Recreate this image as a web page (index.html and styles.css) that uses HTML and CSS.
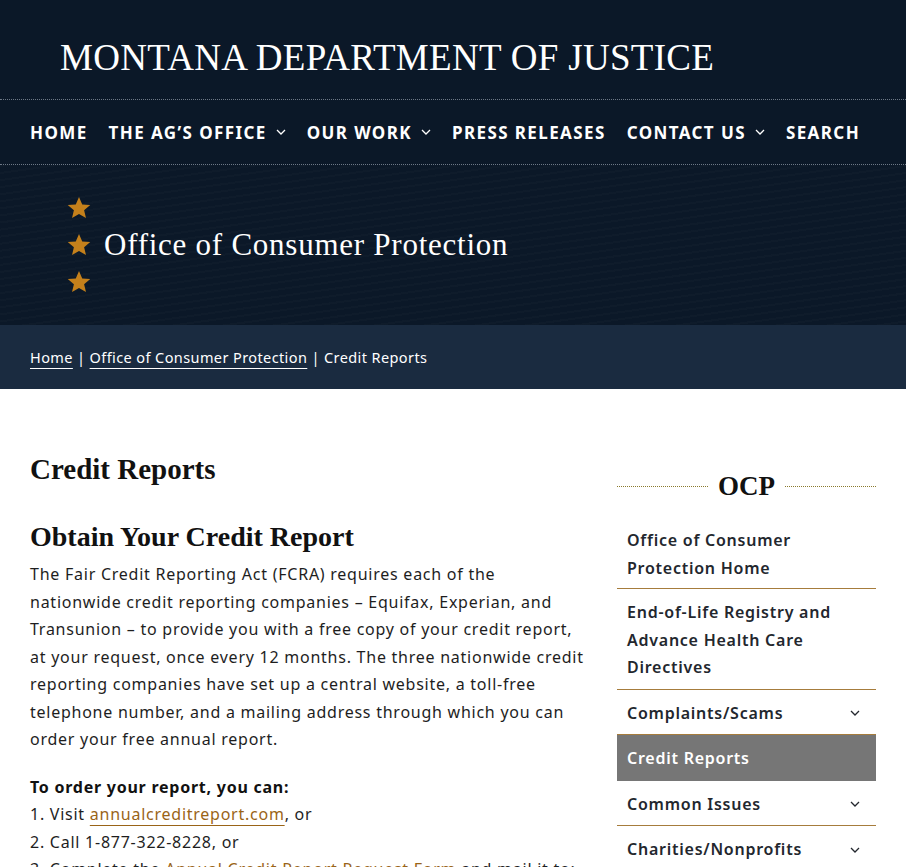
FILE: index.html
```html
<!DOCTYPE html>
<html lang="en">
<head>
    <meta charset="UTF-8">
    <meta name="viewport" content="width=device-width, initial-scale=1.0">
    <title>Credit Reports | Montana Department of Justice</title>
    <link rel="stylesheet" href="styles.css">
</head>
<body>
    <header class="site-header">
        <div class="brand">Montana Department of Justice</div>
        <nav class="main-nav">
            <a href="#">Home</a>
            <a href="#">The AG’s Office <svg class="caret" viewBox="0 0 10 6"><path d="M1 1l4 4 4-4"/></svg></a>
            <a href="#">Our Work <svg class="caret" viewBox="0 0 10 6"><path d="M1 1l4 4 4-4"/></svg></a>
            <a href="#">Press Releases</a>
            <a href="#">Contact Us <svg class="caret" viewBox="0 0 10 6"><path d="M1 1l4 4 4-4"/></svg></a>
            <a href="#">Search</a>
        </nav>
    </header>

    <section class="hero">
        <div class="stars">
            <svg viewBox="0 0 24 24"><path d="M12 1l3.1 7.1 7.7.6-5.9 5 1.8 7.5L12 17.2l-6.7 4 1.8-7.5-5.9-5 7.7-.6z"/></svg>
            <svg viewBox="0 0 24 24"><path d="M12 1l3.1 7.1 7.7.6-5.9 5 1.8 7.5L12 17.2l-6.7 4 1.8-7.5-5.9-5 7.7-.6z"/></svg>
            <svg viewBox="0 0 24 24"><path d="M12 1l3.1 7.1 7.7.6-5.9 5 1.8 7.5L12 17.2l-6.7 4 1.8-7.5-5.9-5 7.7-.6z"/></svg>
        </div>
        <h1 class="hero-title">Office of Consumer Protection</h1>
    </section>

    <div class="breadcrumb">
        <a href="#">Home</a> | <a href="#">Office of Consumer Protection</a> | Credit Reports
    </div>

    <div class="page">
        <main class="content">
            <h1>Credit Reports</h1>
            <h2>Obtain Your Credit Report</h2>
            <p>The Fair Credit Reporting Act (FCRA) requires each of the nationwide credit reporting companies – Equifax, Experian, and Transunion – to provide you with a free copy of your credit report, at your request, once every 12 months. The three nationwide credit reporting companies have set up a central website, a toll-free telephone number, and a mailing address through which you can order your free annual report.</p>
            <p>
                <b>To order your report, you can:</b><br>
                1. Visit <a href="#">annualcreditreport.com</a>, or<br>
                2. Call 1-877-322-8228, or<br>
                3. Complete the <a href="#">Annual Credit Report Request Form</a> and mail it to:
            </p>
        </main>

        <aside class="sidebar">
            <h3 class="side-title"><span>OCP</span></h3>
            <ul class="side-menu">
                <li><a href="#">Office of Consumer Protection Home</a></li>
                <li><a href="#">End-of-Life Registry and Advance Health Care Directives</a></li>
                <li class="has-sub"><a href="#">Complaints/Scams</a><svg class="caret" viewBox="0 0 10 6"><path d="M1 1l4 4 4-4"/></svg></li>
                <li class="active"><a href="#">Credit Reports</a></li>
                <li class="has-sub"><a href="#">Common Issues</a><svg class="caret" viewBox="0 0 10 6"><path d="M1 1l4 4 4-4"/></svg></li>
                <li class="has-sub"><a href="#">Charities/Nonprofits</a><svg class="caret" viewBox="0 0 10 6"><path d="M1 1l4 4 4-4"/></svg></li>
            </ul>
        </aside>
    </div>
</body>
</html>
```

FILE: styles.css
```css
body {
    margin: 0;
    font-family: "Noto Sans", Arial, sans-serif;
    font-size: 16px;
    letter-spacing: 0.75px;
    color: #1e1e1e;
    background: #fff;
}

a {
    color: inherit;
    text-decoration: none;
}

/* header */
.site-header {
    background: #0b1828;
    color: #fff;
}

.brand {
    font-family: "Liberation Serif", "Times New Roman", serif;
    font-size: 37px;
    text-transform: uppercase;
    letter-spacing: 0.3px;
    padding: 36px 60px 0;
    height: 63px;
    border-bottom: 1px dotted #6d7886;
}

.main-nav {
    display: flex;
    align-items: center;
    gap: 21px;
    padding: 0 30px;
    height: 64px;
    border-bottom: 1px dotted #6d7886;
}

.main-nav a {
    display: flex;
    align-items: center;
    gap: 9px;
    font-weight: 700;
    font-size: 17px;
    letter-spacing: 1.4px;
    text-transform: uppercase;
}

.caret {
    width: 10px;
    height: 6px;
    fill: none;
    stroke: currentColor;
    stroke-width: 1.3;
}

/* hero */
.hero {
    display: flex;
    align-items: center;
    gap: 12px;
    height: 160px;
    padding-left: 66px;
    background-color: #0b1828;
    background-image: repeating-linear-gradient(172deg, rgba(255,255,255,0.015) 0 2px, transparent 2px 7px);
}

.stars {
    display: flex;
    flex-direction: column;
    gap: 12px;
}

.stars svg {
    width: 26px;
    height: 25px;
    fill: #c4801b;
}

.hero-title {
    margin: 0;
    font-family: "Liberation Serif", "Times New Roman", serif;
    font-weight: 400;
    font-size: 31px;
    color: #fff;
}

/* breadcrumb */
.breadcrumb {
    background: #1a2b40;
    color: #fff;
    font-size: 14.5px;
    letter-spacing: 0.4px;
    height: 64px;
    line-height: 64px;
    padding: 0 30px;
}

.breadcrumb a {
    text-decoration: underline;
    text-underline-offset: 5px;
    text-decoration-thickness: 1px;
}

/* page body */
.page {
    display: flex;
    gap: 27px;
    padding: 52px 30px 0;
}

.content {
    flex: 1;
}

.content h1,
.content h2 {
    font-family: "Liberation Serif", "Times New Roman", serif;
    font-weight: 700;
    letter-spacing: 0;
    color: #111;
    margin: 0;
}

.content h1 {
    font-size: 29px;
    line-height: 56px;
    margin-bottom: 16px;
}

.content h2 {
    font-size: 28px;
    line-height: 48px;
}

.content p {
    margin: 0 0 20px;
    line-height: 27.5px;
}

.content b {
    font-weight: 700;
    color: #111;
}

.content p a {
    color: #9a6417;
    text-decoration: underline;
    text-underline-offset: 5px;
    text-decoration-thickness: 1px;
}

/* sidebar */
.sidebar {
    width: 259px;
    flex-shrink: 0;
}

.side-title {
    display: flex;
    align-items: center;
    gap: 10px;
    margin: 30px 0 16px;
    font-family: "Liberation Serif", "Times New Roman", serif;
    font-size: 27px;
    font-weight: 700;
    letter-spacing: 0;
    color: #111;
}

.side-title::before,
.side-title::after {
    content: "";
    flex: 1;
    border-top: 1px dotted #8a7a2e;
}

.side-menu {
    list-style: none;
    margin: 0;
    padding: 0;
}

.side-menu li {
    display: flex;
    align-items: center;
    justify-content: space-between;
    padding: 10px 10px 7px;
    line-height: 27.5px;
    font-weight: 600;
    color: #23272e;
    border-bottom: 1px solid #a67c3c;
}

.side-menu li:first-child {
    padding-top: 9px;
    padding-bottom: 6px;
}

.side-menu li.active {
    background: #767676;
    color: #fff;
    border-bottom-color: transparent;
}

.side-menu li .caret {
    margin-right: 6px;
}
```
